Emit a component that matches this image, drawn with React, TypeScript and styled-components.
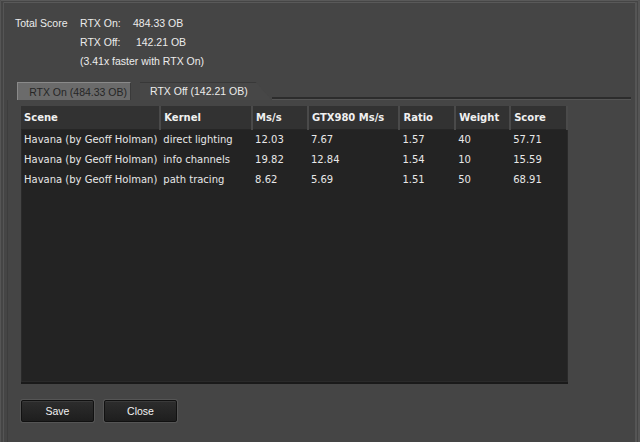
import React from 'react';
import styled, {createGlobalStyle} from 'styled-components';

const GlobalStyle = createGlobalStyle`
  html, body {
    margin: 0;
    padding: 0;
    background: #454545;
  }
`;

interface Row {
    scene: string
    kernel: string
    ms: string
    gtx: string
    ratio: string
    weight: string
    score: string
}

const rows: Row[] = [
    {scene: 'Havana (by Geoff Holman)', kernel: 'direct lighting', ms: '12.03', gtx: '7.67', ratio: '1.57', weight: '40', score: '57.71'},
    {scene: 'Havana (by Geoff Holman)', kernel: 'info channels', ms: '19.82', gtx: '12.84', ratio: '1.54', weight: '10', score: '15.59'},
    {scene: 'Havana (by Geoff Holman)', kernel: 'path tracing', ms: '8.62', gtx: '5.69', ratio: '1.51', weight: '50', score: '68.91'},
];

const columns = [
    {title: 'Scene', width: 138},
    {title: 'Kernel', width: 92},
    {title: 'Ms/s', width: 56},
    {title: 'GTX980 Ms/s', width: 92},
    {title: 'Ratio', width: 56},
    {title: 'Weight', width: 55},
    {title: 'Score', width: 57},
];

const Window = styled.div`
  width: 640px;
  height: 442px;
  box-sizing: border-box;
  background: #454545;
  border-top: 3px double #595959;
  border-left: 4px double #555;
  border-right: 5px double #555;
  font-family: "DejaVu Sans", Verdana, sans-serif;
  color: #e6e6e6;
  display: flex;
  flex-direction: column;
  overflow: hidden;
`;

const Summary = styled.div`
  display: grid;
  grid-template-columns: 65px 53px auto;
  grid-auto-rows: 19px;
  align-items: center;
  padding: 10px 0 0 11px;
  font-family: "Liberation Sans", Arial, sans-serif;
  font-size: 10.5px;
  color: #ececec;
`;

const Cell = styled.span<{ $col?: number }>`
  grid-column: ${p => p.$col ?? 'auto'};
  white-space: nowrap;
`;

const Note = styled.span`
  grid-column: 2 / span 2;
`;

const TabStrip = styled.div`
  display: flex;
  align-items: flex-end;
  margin: 12px 0 0 13px;
  height: 18px;
`;

const Tab = styled.div<{ $active?: boolean }>`
  height: 18px;
  box-sizing: border-box;
  display: flex;
  align-items: center;
  font-family: "Liberation Sans", Arial, sans-serif;
  font-size: 10.5px;
  white-space: nowrap;
  ${p => p.$active ? `
    padding: 0 24px 0 10px;
    margin-left: 9px;
    color: #ececec;
    background: linear-gradient(#383838, #383838) top / 100% 1px no-repeat, #474747;
    clip-path: polygon(0 0, calc(100% - 16px) 0, 100% 100%, 0 100%);
  ` : `
    width: 114px;
    justify-content: flex-end;
    padding-right: 3px;
    color: #262626;
    background: #6b6b6b;
    border: 1px solid #8a8a8a;
    border-right-color: #3a3a3a;
    border-bottom: none;
  `}
`;

const TabLine = styled.div`
  flex: 1;
  height: 2px;
  background: #2c2c2c;
  border-bottom: 1px solid #555;
  margin-right: 4px;
`;

const Frame = styled.div`
  flex: 1;
  margin: 0 4px 0 3px;
  padding: 6px 0 0 13px;
  display: flex;
  flex-direction: column;
  border-left: 1px solid #3d3d3d;
`;

const Panel = styled.div`
  width: 547px;
  height: 276px;
  background: #232323;
  border-bottom: 2px solid #1a1a1a;
  box-shadow: inset 0 0 0 1px #2a2a2a;
  overflow: hidden;
`;

const Table = styled.table`
  border-collapse: collapse;
  table-layout: fixed;
  font-family: "DejaVu Sans", Verdana, sans-serif;
  font-size: 10px;
`;

const Head = styled.th<{ $w: number }>`
  width: ${p => p.$w}px;
  height: 23px;
  box-sizing: border-box;
  padding: 0 3px;
  text-align: left;
  font-weight: bold;
  color: #f0f0f0;
  background: #323232;
  border-right: 2px solid #4a4a4a;
  border-bottom: 1px solid #262626;
`;

const Td = styled.td`
  height: 20px;
  padding: 0 3px;
  white-space: nowrap;
  overflow: hidden;
  color: #e8e8e8;
`;

const Buttons = styled.div`
  display: flex;
  gap: 10px;
  margin-top: 16px;
`;

const Button = styled.button`
  width: 73px;
  height: 22px;
  padding: 0;
  font-family: "Liberation Sans", Arial, sans-serif;
  font-size: 10.5px;
  color: #f2f2f2;
  background: linear-gradient(#2d2d2d, #1e1e1e);
  border: 1px solid #111;
  border-radius: 2px;
  box-shadow: 0 0 0 1px #555, inset 0 1px 0 #3a3a3a;
`;

export default function App() {
    return (
        <>
            <GlobalStyle/>
            <Window>
                <Summary>
                    <Cell>Total Score</Cell>
                    <Cell>RTX On:</Cell>
                    <Cell>484.33 OB</Cell>
                    <Cell $col={2}>RTX Off:</Cell>
                    <Cell>&nbsp;142.21 OB</Cell>
                    <Note>(3.41x faster with RTX On)</Note>
                </Summary>
                <TabStrip>
                    <Tab>RTX On (484.33 OB)</Tab>
                    <Tab $active>RTX Off (142.21 OB)</Tab>
                    <TabLine/>
                </TabStrip>
                <Frame>
                    <Panel>
                        <Table>
                            <thead>
                            <tr>
                                {columns.map(c => <Head key={c.title} $w={c.width}>{c.title}</Head>)}
                            </tr>
                            </thead>
                            <tbody>
                            {rows.map((r, i) => (
                                <tr key={i}>
                                    <Td>{r.scene}</Td>
                                    <Td>{r.kernel}</Td>
                                    <Td>{r.ms}</Td>
                                    <Td>{r.gtx}</Td>
                                    <Td>{r.ratio}</Td>
                                    <Td>{r.weight}</Td>
                                    <Td>{r.score}</Td>
                                </tr>
                            ))}
                            </tbody>
                        </Table>
                    </Panel>
                    <Buttons>
                        <Button>Save</Button>
                        <Button>Close</Button>
                    </Buttons>
                </Frame>
            </Window>
        </>
    );
}
